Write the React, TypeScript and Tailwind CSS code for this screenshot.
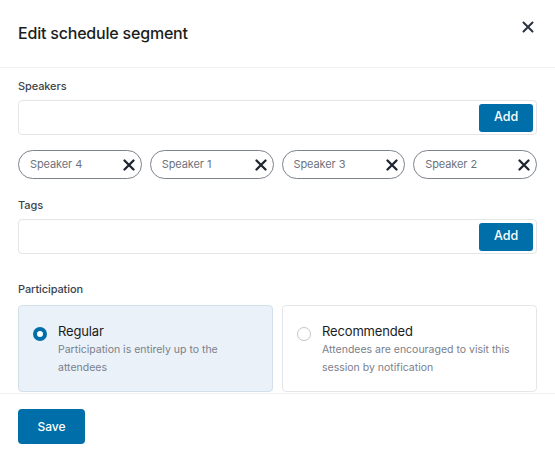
import React, { useState } from 'react';

// --- Icons ---
const CloseIcon: React.FC<{ className?: string; strokeWidth?: number }> = ({ className, strokeWidth = 2 }) => (
  <svg className={className} viewBox="0 0 12 12" fill="none" stroke="currentColor" strokeWidth={strokeWidth} strokeLinecap="round">
    <path d="M1.5 1.5l9 9M10.5 1.5l-9 9" />
  </svg>
);

const speakers = ['Speaker 4', 'Speaker 1', 'Speaker 3', 'Speaker 2'];

const options = [
  { id: 'regular', title: 'Regular', desc: 'Participation is entirely up to the attendees' },
  { id: 'recommended', title: 'Recommended', desc: 'Attendees are encouraged to visit this session by notification' },
];

const FieldLabel: React.FC<{ children: React.ReactNode; className?: string }> = ({ children, className }) => (
  <div className={`text-[11px] leading-4 font-medium tracking-[-0.1px] text-[#3d434d] ${className ?? ''}`}>{children}</div>
);

const AddInput: React.FC = () => (
  <div className="h-[35px] border border-[#e3e5e8] rounded-[4px] flex items-center justify-end pr-[3px]">
    <input className="flex-1 h-full px-3 outline-none bg-transparent text-[13px]" />
    <button className="h-[28px] w-[54px] rounded-[3px] bg-[#006ea8] text-white text-[12.5px] font-medium">Add</button>
  </div>
);

export default function App() {
  const [selected, setSelected] = useState('regular');

  return (
    <div className="w-[555px] h-[455px] bg-white flex flex-col overflow-hidden text-[#1c1f24]" style={{ fontFamily: 'Inter, "Noto Sans", sans-serif' }}>
      <header className="h-[68px] shrink-0 border-b border-[#eef0f2] flex items-center justify-between pl-[18px] pr-[21px]">
        <h1 className="text-[16px] font-medium tracking-[-0.2px] text-[#1a1d21] -mt-[1px]">Edit schedule segment</h1>
        <button className="-mt-[14px] text-[#2b3240]">
          <CloseIcon className="w-[12px] h-[12px]" />
        </button>
      </header>

      <main className="flex-1 overflow-hidden px-[18px] pt-[10px]">
        <FieldLabel className="mb-[6px]">Speakers</FieldLabel>
        <AddInput />

        <div className="grid grid-cols-4 gap-2 mt-[15px]">
          {speakers.map(s => (
            <div key={s} className="h-[29px] rounded-full border border-[#7d838d] flex items-center justify-between pl-[11px] pr-[6px]">
              <span className="text-[11px] tracking-[-0.1px] text-[#6d737d]">{s}</span>
              <CloseIcon className="w-[12px] h-[12px] text-[#1f2530]" strokeWidth={2.3} />
            </div>
          ))}
        </div>

        <FieldLabel className="mt-[18px] mb-[6px]">Tags</FieldLabel>
        <AddInput />

        <FieldLabel className="mt-[27px] mb-[8px]">Participation</FieldLabel>
        <div className="grid grid-cols-2 gap-[9px]">
          {options.map(o => {
            const active = selected === o.id;
            return (
              <button
                key={o.id}
                onClick={() => setSelected(o.id)}
                className={`text-left rounded-[4px] border pt-[15px] pb-[14px] px-[14px] flex gap-[11px] ${active ? 'bg-[#eaf1f8] border-[#d3e0ec]' : 'bg-white border-[#e4e6ea]'}`}
              >
                <span className={`mt-[6px] shrink-0 w-[14px] h-[14px] rounded-full ${active ? 'border-[4px] border-[#006ea8] bg-white' : 'border border-[#c3c6cb] bg-white'}`} />
                <span className="flex flex-col">
                  <span className="text-[13px] leading-5 tracking-[-0.15px] text-[#1a1d21]">{o.title}</span>
                  <span className="text-[10.5px] leading-[18px] text-[#7a808b] pr-1">{o.desc}</span>
                </span>
              </button>
            );
          })}
        </div>
      </main>

      <footer className="h-[62px] shrink-0 border-t border-[#eef0f2] px-[18px] pt-[15px]">
        <button className="h-[35px] w-[67px] rounded-[4px] bg-[#006ea8] text-white text-[12px] font-medium">Save</button>
      </footer>
    </div>
  );
}
